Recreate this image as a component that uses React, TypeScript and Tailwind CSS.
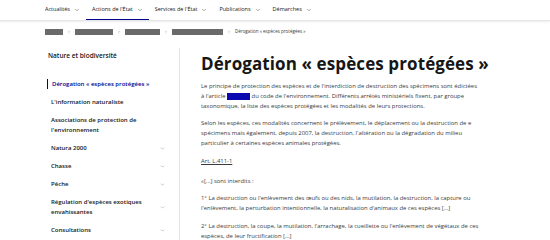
import React from "react";
import { ChevronDown, ChevronRight } from "lucide-react";

const font = { fontFamily: '"Open Sans", "Noto Sans", sans-serif' };

function NavItem({ label, active }: { label: string; active?: boolean }) {
  return (
    <div
      className={`flex items-center gap-[4px] h-full px-[6px] text-[5.5px] text-[#161616] ${
        active ? "border-b-[1.5px] border-[#000091]" : "border-b-[1.5px] border-transparent"
      }`}
    >
      <span>{label}</span>
      <ChevronDown size={6} strokeWidth={1.5} className="text-[#161616]" />
    </div>
  );
}

function SideItem({
  label,
  chevron,
  active,
}: {
  label: React.ReactNode;
  chevron?: boolean;
  active?: boolean;
}) {
  return (
    <div className="flex items-center justify-between pr-[14px] py-[4px]">
      <div
        className={`text-[6px] leading-[10px] font-semibold ${
          active ? "text-[#000091] border-l border-[#000091] pl-[4px] -ml-[4px]" : "text-[#161616]"
        }`}
      >
        {label}
      </div>
      {chevron && <ChevronDown size={5} strokeWidth={1.5} className="text-[#555]" />}
    </div>
  );
}

export default function App() {
  return (
    <div className="w-[550px] h-[240px] overflow-hidden bg-white" style={font}>
      {/* Nav */}
      <div className="h-[21px] border-b border-[#e5e5e5] shadow-[0_1px_2px_rgba(0,0,0,0.08)] flex items-stretch pl-[39px]">
        <NavItem label="Actualités" />
        <NavItem label="Actions de l'État" active />
        <NavItem label="Services de l'État" />
        <NavItem label="Publications" />
        <NavItem label="Démarches" />
      </div>

      {/* Breadcrumb */}
      <div className="flex items-center gap-[3px] pl-[45px] mt-[7px] h-[7px] text-[4.5px] text-[#3a3a3a]">
        <div className="w-[18px] h-[6px] bg-[#6a6a6a]" />
        <ChevronRight size={4} className="text-[#666] mx-[1px]" />
        <div className="w-[38px] h-[6px] bg-[#6a6a6a]" />
        <ChevronRight size={4} className="text-[#666] mx-[1px]" />
        <div className="w-[35px] h-[6px] bg-[#6a6a6a]" />
        <ChevronRight size={4} className="text-[#666] mx-[1px]" />
        <div className="w-[51px] h-[6px] bg-[#6a6a6a]" />
        <ChevronRight size={4} className="text-[#666] mx-[1px]" />
        <span>Dérogation « espèces protégées »</span>
      </div>

      {/* Body */}
      <div className="flex mt-[13px]">
        <div className="w-[180px] shrink-0 pl-[48px] border-r border-[#e5e5e5] pt-[3px] h-[200px]">
          <div className="text-[6.5px] font-semibold text-[#161616] leading-[10px]">
            Nature et biodiversité
          </div>
          <div className="mt-[14px] pl-[3px]">
            <SideItem label="Dérogation « espèces protégées »" active />
            <SideItem label="L'information naturaliste" />
            <SideItem
              label={
                <>
                  Associations de protection de
                  <br />
                  l'environnement
                </>
              }
            />
            <SideItem label="Natura 2000" chevron />
            <SideItem label="Chasse" chevron />
            <SideItem label="Pêche" chevron />
            <SideItem
              label={
                <>
                  Régulation d'espèces exotiques
                  <br />
                  envahissantes
                </>
              }
              chevron
            />
            <SideItem label="Consultations" chevron />
          </div>
        </div>

        <div className="pl-[21px] pr-[30px] text-[#3a3a3a]">
          <h1 className="text-[17px] font-bold text-[#161616] leading-[22px] mt-[5px] tracking-[0.1px]">
            Dérogation « espèces protégées »
          </h1>
          <div className="text-[5.9px] leading-[10px] mt-[6px] w-[330px]">
            <p>
              Le principe de protection des espèces et de l'interdiction de destruction des spécimens sont édictées
              <br />à l'article{" "}
              <span className="inline-block w-[23px] h-[7px] bg-[#0a0ab0] align-middle" /> du code de
              l'environnement. Différents arrêtés ministériels fixent, par groupe
              <br />
              taxonomique, la liste des espèces protégées et les modalités de leurs protections.
            </p>
            <p className="mt-[7px]">
              Selon les espèces, ces modalités concernent le prélèvement, le déplacement ou la destruction de e
              <br />
              spécimens mais également, depuis 2007, la destruction, l'altération ou la dégradation du milieu
              <br />
              particulier à certaines espèces animales protégées.
            </p>
            <p className="mt-[8px] underline">Art. L.411-1</p>
            <p className="mt-[10px]">«[...] sont interdits :</p>
            <p className="mt-[7px]">
              1° La destruction ou l'enlèvement des œufs ou des nids, la mutilation, la destruction, la capture ou
              <br />
              l'enlèvement, la perturbation intentionnelle, la naturalisation d'animaux de ces espèces [...]
            </p>
            <p className="mt-[8px]">
              2° La destruction, la coupe, la mutilation, l'arrachage, la cueillette ou l'enlèvement de végétaux de ces
              <br />
              espèces, de leur fructification [...]
            </p>
          </div>
        </div>
      </div>
    </div>
  );
}
